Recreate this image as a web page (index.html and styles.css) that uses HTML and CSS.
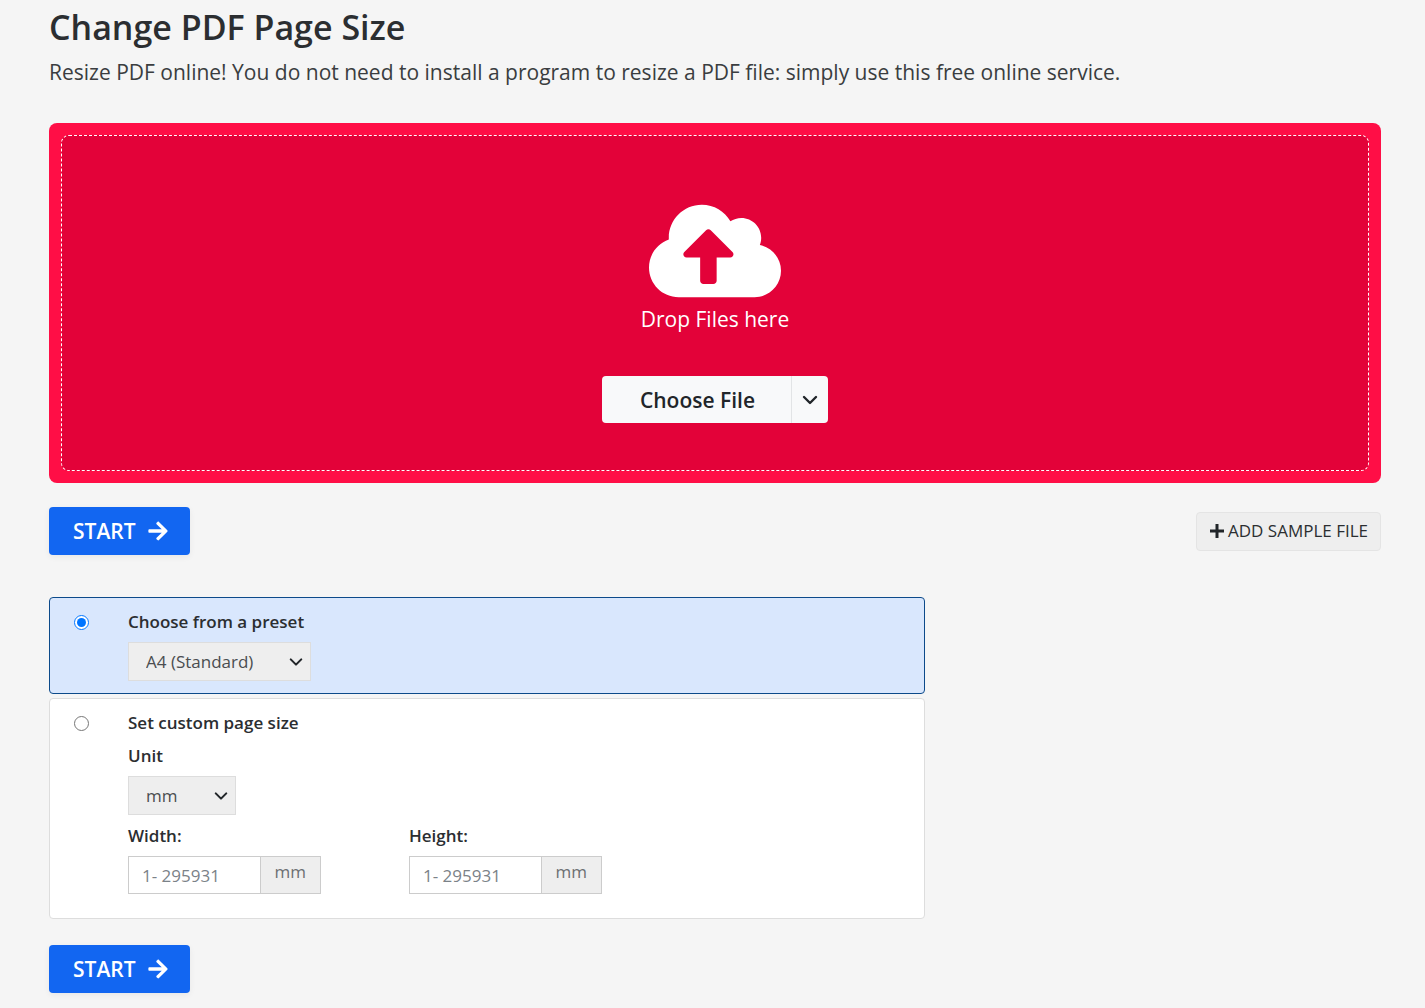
FILE: index.html
```html
<!DOCTYPE html>
<html lang="en">
<head>
    <meta charset="UTF-8">
    <meta name="viewport" content="width=device-width, initial-scale=1.0">
    <title>Change PDF Page Size</title>
    <link rel="stylesheet" href="styles.css">
</head>
<body>
    <main class="container">
        <h1>Change PDF Page Size</h1>
        <p class="lead">Resize PDF online! You do not need to install a program to resize a PDF file: simply use this free online service.</p>

        <!-- Upload area -->
        <section class="uploader">
            <div class="dropzone">
                <svg class="cloud-icon" viewBox="0 0 640 512" aria-hidden="true"><path d="M537.6 226.6c4.1-10.7 6.4-22.4 6.4-34.6 0-53-43-96-96-96-19.7 0-38.1 6-53.3 16.2C367 64.2 315.3 32 256 32c-88.4 0-160 71.6-160 160 0 2.7.1 5.4.2 8.1C40.2 219.8 0 273.2 0 336c0 79.5 64.5 144 144 144h368c70.7 0 128-57.3 128-128 0-61.9-44-113.6-102.4-125.4zM393.4 288H328v112c0 8.8-7.2 16-16 16h-48c-8.8 0-16-7.2-16-16V288h-65.4c-14.3 0-21.4-17.2-11.3-27.4l105.4-105.4c6.2-6.2 16.4-6.2 22.6 0l105.4 105.4c10.1 10.2 2.9 27.4-11.3 27.4z"/></svg>
                <p class="drop-text">Drop Files here</p>
                <div class="btn-group">
                    <button type="button" class="btn-choose">Choose File</button>
                    <button type="button" class="btn-more" aria-label="More sources">
                        <svg class="chevron-icon" viewBox="0 0 16 16" aria-hidden="true"><path d="M2 5l6 6 6-6"/></svg>
                    </button>
                </div>
            </div>
        </section>

        <form class="settings">
            <div class="actions">
                <button type="button" class="btn-start">START
                    <svg class="arrow-icon" viewBox="0 0 448 512" aria-hidden="true"><path d="M190.5 66.9l22.2-22.2c9.4-9.4 24.6-9.4 33.9 0L441 239c9.4 9.4 9.4 24.6 0 33.9L246.6 467.3c-9.4 9.4-24.6 9.4-33.9 0l-22.2-22.2c-9.5-9.5-9.3-25 .4-34.3L311.4 296H24c-13.3 0-24-10.7-24-24v-32c0-13.3 10.7-24 24-24h287.4L190.9 101.2c-9.8-9.3-10-24.8-.4-34.3z"/></svg>
                </button>
                <button type="button" class="btn-sample">
                    <svg class="plus-icon" viewBox="0 0 16 16" aria-hidden="true"><path d="M8 1v14M1 8h14"/></svg>
                    ADD SAMPLE FILE
                </button>
            </div>

            <!-- Page size options -->
            <div class="options">
                <div class="option active">
                    <input type="radio" name="mode" id="mode-preset" checked>
                    <div class="option-body">
                        <label for="mode-preset">Choose from a preset</label>
                        <select class="select-preset" aria-label="Preset">
                            <option>A4 (Standard)</option>
                        </select>
                    </div>
                </div>

                <div class="option option-custom">
                    <input type="radio" name="mode" id="mode-custom">
                    <div class="option-body">
                        <label for="mode-custom" class="custom-title">Set custom page size</label>
                        <label for="unit">Unit</label>
                        <select id="unit" class="select-unit">
                            <option>mm</option>
                        </select>
                        <div class="dimensions">
                            <div class="dimension">
                                <label for="width">Width:</label>
                                <div class="input-group">
                                    <input type="text" id="width" placeholder="1- 295931">
                                    <span class="unit">mm</span>
                                </div>
                            </div>
                            <div class="dimension">
                                <label for="height">Height:</label>
                                <div class="input-group">
                                    <input type="text" id="height" placeholder="1- 295931">
                                    <span class="unit">mm</span>
                                </div>
                            </div>
                        </div>
                    </div>
                </div>
            </div>

            <button type="button" class="btn-start">START
                <svg class="arrow-icon" viewBox="0 0 448 512" aria-hidden="true"><path d="M190.5 66.9l22.2-22.2c9.4-9.4 24.6-9.4 33.9 0L441 239c9.4 9.4 9.4 24.6 0 33.9L246.6 467.3c-9.4 9.4-24.6 9.4-33.9 0l-22.2-22.2c-9.5-9.5-9.3-25 .4-34.3L311.4 296H24c-13.3 0-24-10.7-24-24v-32c0-13.3 10.7-24 24-24h287.4L190.9 101.2c-9.8-9.3-10-24.8-.4-34.3z"/></svg>
            </button>
        </form>
    </main>
</body>
</html>
```
FILE: styles.css
```css
* {
    box-sizing: border-box;
}
body {
    margin: 0;
    background-color: #f5f5f5;
    color: #2b2e31;
    font-family: "Open Sans", sans-serif;
    font-size: 17px;
    font-weight: 400;
    line-height: 24px;
}
button, input, select {
    font: inherit;
    color: inherit;
}
button {
    cursor: pointer;
}
.container {
    padding: 6px 44px 15px 49px;
}
h1 {
    margin: 0 0 8px;
    font-size: 34px;
    font-weight: 600;
    line-height: 42px;
}
.lead {
    margin: 0 0 35px;
    color: #3a3d40;
    font-size: 21px;
    line-height: 32px;
}

/* Upload area */
.uploader {
    padding: 12px;
    background-color: #ff0e46;
    border-radius: 8px;
}
.dropzone {
    display: flex;
    flex-direction: column;
    align-items: center;
    padding: 62px 16px 47px;
    background-color: #e30239;
    border: 1px dashed #fff;
    border-radius: 8px;
    color: #fff;
}
.cloud-icon {
    width: 132px;
    height: 106px;
    fill: #fff;
}
.drop-text {
    margin: 0 0 42px;
    font-size: 21px;
    line-height: 30px;
}
.btn-group {
    display: flex;
    height: 47px;
}
.btn-choose, .btn-more {
    display: flex;
    align-items: center;
    justify-content: center;
    background-color: #f8f9fa;
    border: none;
    color: #212529;
}
.btn-choose {
    padding: 0 36px 0 38px;
    border-right: 1px solid #e2e4e6;
    border-radius: 4px 0 0 4px;
    font-size: 21px;
    font-weight: 600;
}
.btn-more {
    width: 36px;
    padding: 0;
    border-radius: 0 4px 4px 0;
}
.chevron-icon {
    width: 16px;
    height: 16px;
    fill: none;
    stroke: #212529;
    stroke-width: 2.4;
    stroke-linecap: round;
    stroke-linejoin: round;
}

/* Buttons */
.actions {
    display: flex;
    align-items: center;
    justify-content: space-between;
    margin: 24px 0 42px;
}
.btn-start {
    display: flex;
    align-items: center;
    gap: 12px;
    height: 48px;
    padding: 0 22px 0 24px;
    background-color: #1266f1;
    border: none;
    border-radius: 4px;
    box-shadow: 0 2px 6px rgba(0, 0, 0, 0.06);
    color: #fff;
    font-size: 21px;
    font-weight: 600;
}
.arrow-icon {
    width: 20px;
    height: 22px;
    fill: #fff;
}
.btn-sample {
    display: flex;
    align-items: center;
    gap: 3px;
    height: 39px;
    padding: 0 12px;
    background-color: #eee;
    border: 1px solid #e4e4e4;
    border-radius: 4px;
}
.plus-icon {
    width: 16px;
    height: 16px;
    stroke: #212529;
    stroke-width: 3;
}

/* Page size options */
.options {
    width: calc(66.6667% - 12px);
    margin-bottom: 26px;
}
.option {
    display: flex;
    align-items: flex-start;
    gap: 38px;
    padding: 12px 24px;
    background-color: #fff;
    border: 1px solid #ddd;
    border-radius: 4px;
}
.option.active {
    margin-bottom: 4px;
    background-color: #d9e7fd;
    border-color: #0c4a8a;
}
.option-custom {
    padding-bottom: 24px;
}
.option input[type="radio"] {
    width: 15px;
    height: 15px;
    margin: 5px 1px 0 0;
}
.option-body {
    flex: 1;
}
.option label {
    display: block;
    margin-bottom: 8px;
    font-weight: 600;
}
.option .custom-title {
    margin-bottom: 9px;
}
select {
    display: block;
    height: 39px;
    padding: 0 36px 0 17px;
    appearance: none;
    background: #eee url("data:image/svg+xml,%3Csvg xmlns='http://www.w3.org/2000/svg' viewBox='0 0 16 16'%3E%3Cpath fill='none' stroke='%23212529' stroke-width='2.4' stroke-linecap='round' stroke-linejoin='round' d='M2 5l6 6 6-6'/%3E%3C/svg%3E") no-repeat right 7px center / 14px;
    border: 1px solid #ddd;
    border-radius: 0;
    color: #4a4d50;
}
.select-preset {
    width: 183px;
}
.select-unit {
    width: 108px;
    margin-bottom: 9px;
}
.dimensions {
    display: flex;
    gap: 88px;
}
.input-group {
    display: flex;
    width: 193px;
    height: 38px;
    border: 1px solid #ccc;
}
.input-group input {
    flex: 1;
    min-width: 0;
    padding: 2px 13px 0;
    background: none;
    border: none;
}
.input-group input::placeholder {
    color: #7b8288;
    opacity: 1;
}
.unit {
    padding: 3px 14px;
    background-color: #eee;
    border-left: 1px solid #ccc;
    color: #6c6f72;
}
```
